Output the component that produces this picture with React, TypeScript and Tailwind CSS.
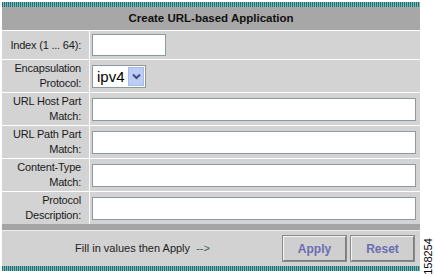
import React from "react";

const stripe =
  "h-[5px] bg-[repeating-linear-gradient(90deg,#2a6f6f_0px,#2a6f6f_1px,#79b6b6_1px,#79b6b6_2px)]";

const rows = [
  { label: ["Index (1 ... 64):"], kind: "short" },
  { label: ["Encapsulation", "Protocol:"], kind: "select" },
  { label: ["URL Host Part", "Match:"], kind: "text" },
  { label: ["URL Path Part", "Match:"], kind: "text" },
  { label: ["Content-Type", "Match:"], kind: "text" },
  { label: ["Protocol", "Description:"], kind: "text" },
];

function Field({ kind }: { kind: string }) {
  if (kind === "short") {
    return <div className="w-[74px] h-[22px] bg-white border border-[#8d989f]" />;
  }
  if (kind === "select") {
    return (
      <div className="flex items-center w-[54px] h-[23px] bg-white border border-[#8d989f] pl-[4px] pr-[1px]">
        <span className="flex-1 text-[15px] leading-none text-black">ipv4</span>
        <span className="w-[16px] h-[19px] bg-[#bccdf5] border border-[#a8bbe8] flex items-center justify-center">
          <svg width="9" height="7" viewBox="0 0 9 7">
            <path d="M1 1.5 L4.5 5 L8 1.5" fill="none" stroke="#3b4f82" strokeWidth="2" />
          </svg>
        </span>
      </div>
    );
  }
  return <div className="w-full h-[23px] bg-white border border-[#8d989f]" />;
}

function Button({ children }: { children: React.ReactNode }) {
  return (
    <div className="w-[63px] h-[25px] flex items-center justify-center bg-[#cfcfcf] border border-t-[#f4f4f4] border-l-[#f4f4f4] border-r-[#7c7c7c] border-b-[#7c7c7c] outline outline-1 outline-[#8a8a8a] text-[12px] font-bold text-[#6b6db3]">
      {children}
    </div>
  );
}

export default function App() {
  return (
    <div
      className="relative w-[435px] h-[276px] bg-white overflow-hidden pt-[2px] pl-[2px]"
      style={{ fontFamily: '"Liberation Sans", Arial, sans-serif' }}
    >
      <div className="w-[418px]">
        <div className={stripe} />
        <div className="h-[23px] bg-[#a7a7a7] flex items-center justify-center text-[11.5px] font-bold text-[#111]">
          Create URL-based Application
        </div>

        {rows.map((row, i) => (
          <div
            key={i}
            className={`flex border-t border-white bg-[#d3d3d3] ${i === 0 ? "h-[29px]" : "h-[33px]"}`}
          >
            <div className="w-[87px] flex flex-col justify-center items-end pr-[8px] text-[11px] leading-[15px] tracking-[-0.2px] text-[#1a1a1a] text-right whitespace-nowrap">
              {row.label.map((l) => (
                <span key={l}>{l}</span>
              ))}
            </div>
            <div className="flex-1 flex items-center border-l border-white pl-[2px] pr-[4px]">
              <Field kind={row.kind} />
            </div>
          </div>
        ))}

        <div className="h-[6px] bg-[#a4a4a4]" />
        <div className="h-[36px] border-t border-[#ececec] bg-[#d2d2d2] flex items-center">
          <div className="w-[279px] flex justify-center pl-[2px] text-[11px] text-[#222]">
            <span>
              Fill in values then Apply <span className="text-[#3e5c5c] ml-[3px]">--&gt;</span>
            </span>
          </div>
          <div className="flex gap-[5px] ml-[2px]">
            <Button>Apply</Button>
            <Button>Reset</Button>
          </div>
        </div>
        <div className={stripe} />
      </div>

      <div className="absolute left-[409px] top-[251px] w-[38px] -rotate-90 text-[11px] leading-none text-black text-center">
        158254
      </div>
    </div>
  );
}
